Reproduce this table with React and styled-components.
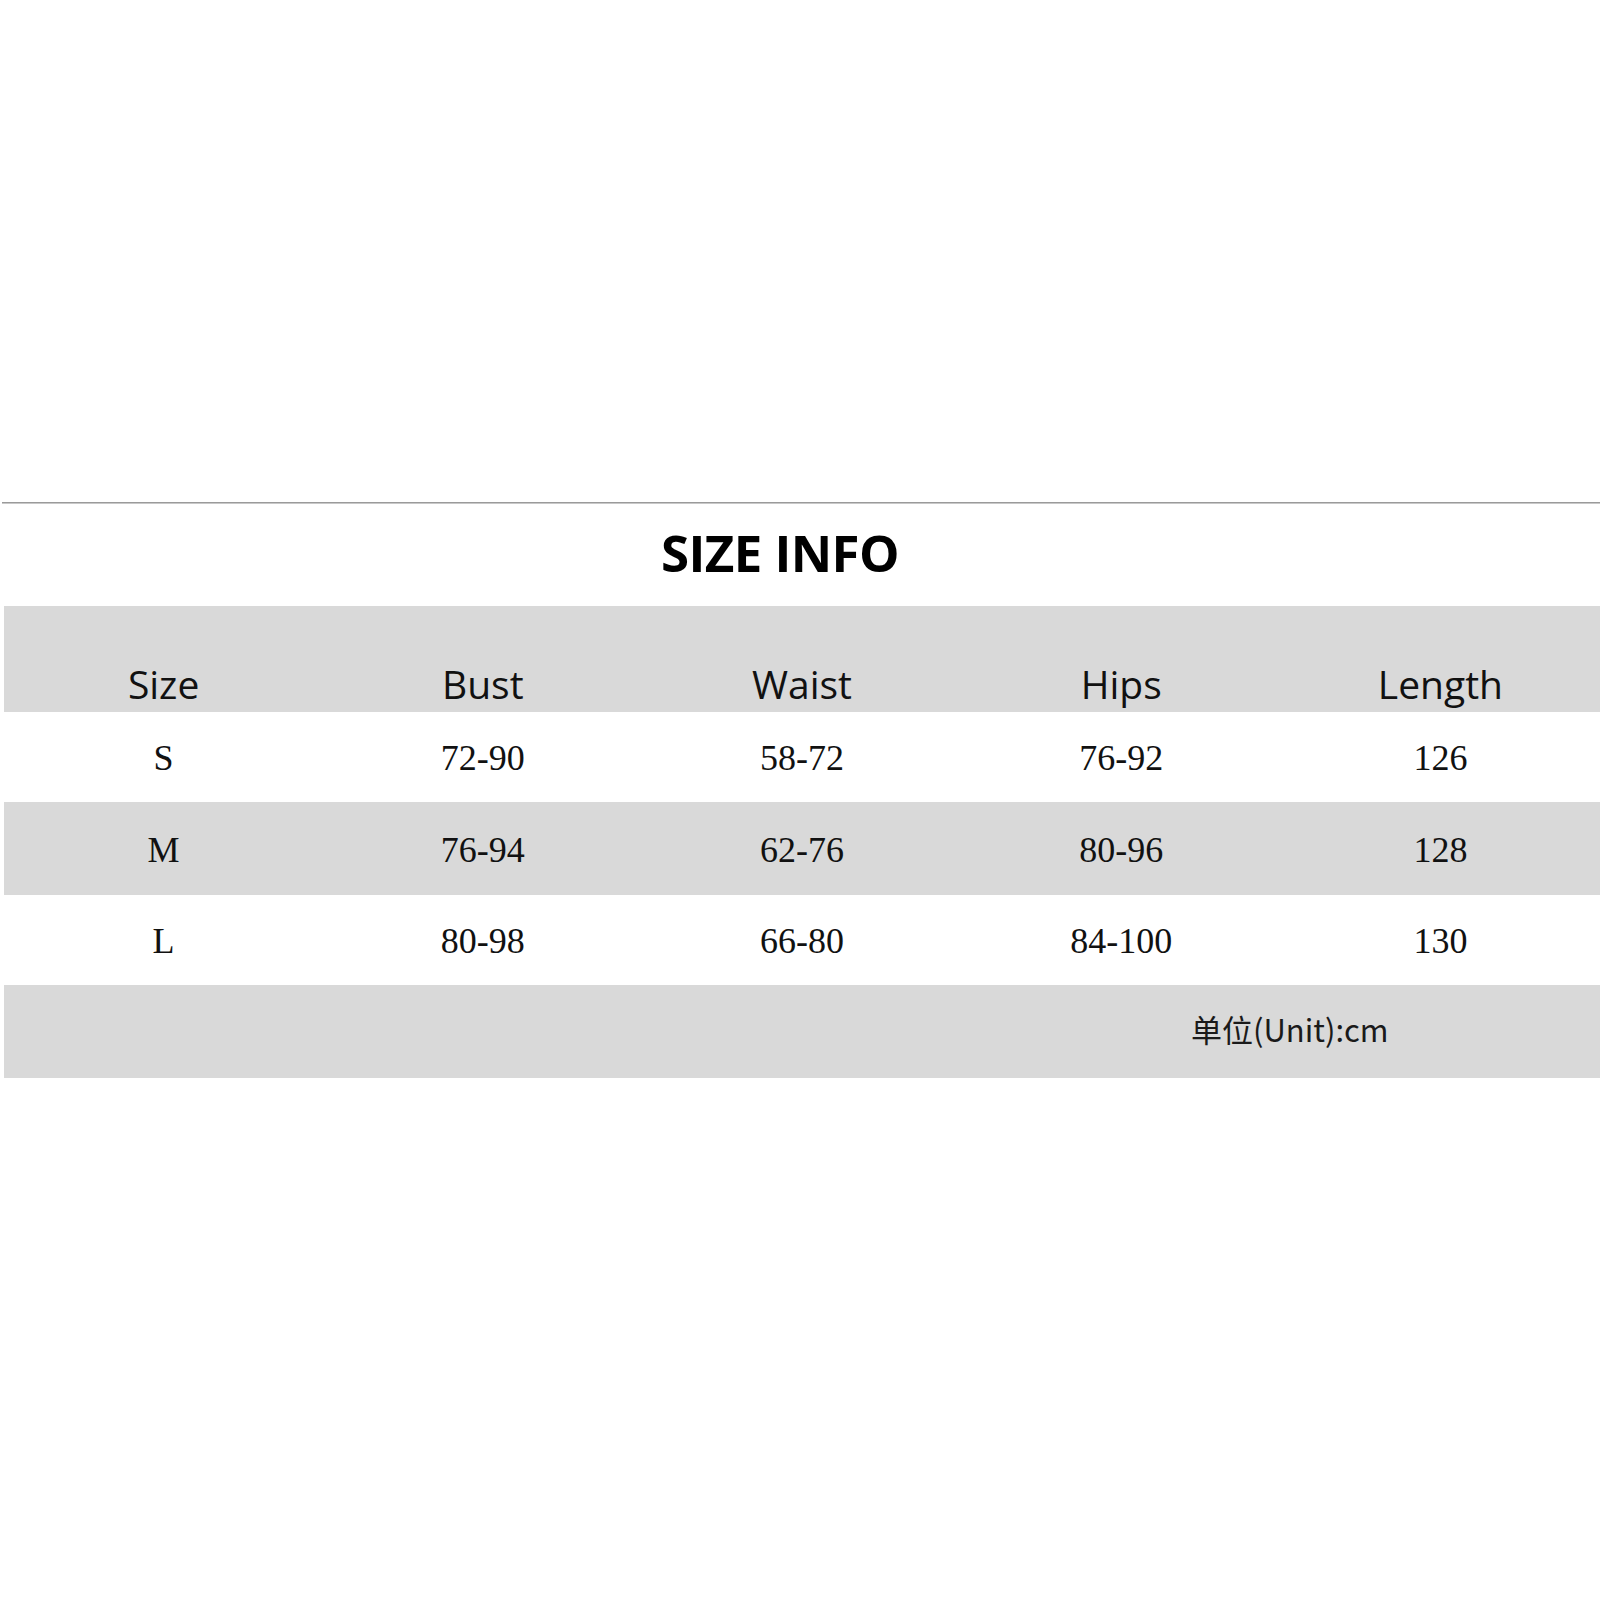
import React from "react";
import styled, { createGlobalStyle } from "styled-components";

const Global = createGlobalStyle`
  html, body { margin: 0; padding: 0; background: #ffffff; }
  body { font-family: "Open Sans", "Liberation Sans", sans-serif; color: #000; }
`;

const Page = styled.div`
  width: 1600px;
  min-height: 1600px;
  padding-top: 502px;
  box-sizing: border-box;
  background: #fff;
  overflow: hidden;
`;

const Rule = styled.div`
  margin-left: 2px;
  height: 0;
  border-top: 1px solid #9a9a9a;
  border-bottom: 1px solid #c8c8c8;
`;

const Title = styled.h1`
  margin: 0;
  height: 102px;
  box-sizing: border-box;
  padding: 23px 40px 0 0;
  text-align: center;
  font-family: "Open Sans", "Liberation Sans", sans-serif;
  font-weight: 700;
  font-size: 51px;
  line-height: 51px;
  letter-spacing: -0.6px;
  color: #000;
`;

const Table = styled.div`
  margin-left: 4px;
  width: 1596px;
  display: grid;
  grid-template-columns: repeat(5, 1fr);
`;

const Row = styled.div`
  display: contents;
`;

const HeadCell = styled.div`
  height: 106px;
  box-sizing: border-box;
  background: #d9d9d9;
  display: flex;
  align-items: flex-end;
  justify-content: center;
  padding-bottom: 8px;
  font-family: "Open Sans", "Liberation Sans", sans-serif;
  font-size: 39px;
  line-height: 40px;
  color: #111;
`;

const Cell = styled.div`
  height: ${(p) => p.$h}px;
  background: ${(p) => (p.$shade ? "#d9d9d9" : "#ffffff")};
  display: flex;
  align-items: center;
  justify-content: center;
  padding-top: 2px;
  box-sizing: border-box;
  font-family: "Liberation Serif", "Times New Roman", serif;
  font-size: 36px;
  color: #111;
`;

const FooterSpacer = styled.div`
  grid-column: 1 / 4;
  height: 93px;
  background: #d9d9d9;
`;

const FooterNote = styled.div`
  grid-column: 4 / 6;
  height: 93px;
  background: #d9d9d9;
  display: flex;
  align-items: center;
  justify-content: center;
  padding: 0 0 6px 18px;
  box-sizing: border-box;
  font-family: "Noto Sans CJK SC", "Noto Sans", sans-serif;
  font-size: 31px;
  color: #1a1a1a;
`;

const headers = ["Size", "Bust", "Waist", "Hips", "Length"];
const rows = [
  { cells: ["S", "72-90", "58-72", "76-92", "126"], h: 90, shade: false },
  { cells: ["M", "76-94", "62-76", "80-96", "128"], h: 93, shade: true },
  { cells: ["L", "80-98", "66-80", "84-100", "130"], h: 90, shade: false },
];

export default function App() {
  return (
    <>
      <Global />
      <Page>
        <Rule />
        <Title>SIZE INFO</Title>
        <Table>
          <Row>
            {headers.map((h) => (
              <HeadCell key={h}>{h}</HeadCell>
            ))}
          </Row>
          {rows.map((r) => (
            <Row key={r.cells[0]}>
              {r.cells.map((c, i) => (
                <Cell key={i} $h={r.h} $shade={r.shade}>
                  {c}
                </Cell>
              ))}
            </Row>
          ))}
          <Row>
            <FooterSpacer />
            <FooterNote>单位(Unit):cm</FooterNote>
          </Row>
        </Table>
      </Page>
    </>
  );
}
